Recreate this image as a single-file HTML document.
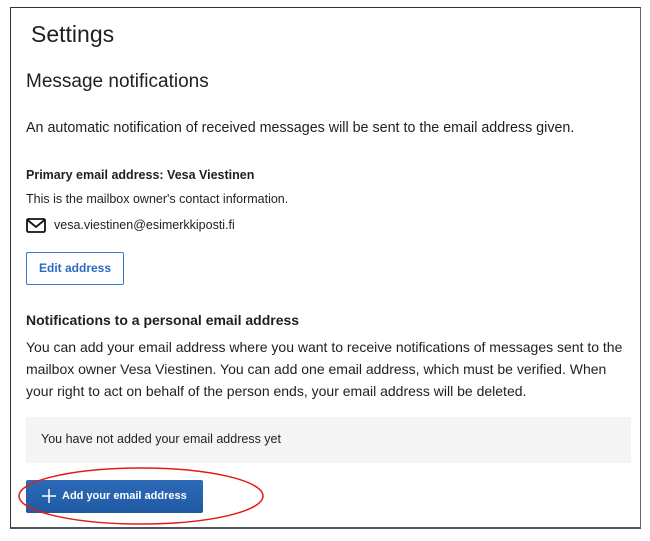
<!DOCTYPE html>
<html><head><style>
*{margin:0;padding:0;box-sizing:border-box}
body{width:650px;height:541px;background:#fff;font-family:"Liberation Sans",sans-serif;color:#1f1f1f;position:relative;overflow:hidden}
.frame{position:absolute;left:10px;top:7px;width:631px;height:522px;border:1px solid #333;border-right-color:#666;border-bottom:2px solid #555}
.t{position:absolute;white-space:nowrap}
</style></head><body>
<div class="frame"></div>
<div class="t" style="left:31px;top:21px;font-size:23px">Settings</div>
<div class="t" style="left:26px;top:71px;font-size:19px">Message notifications</div>
<div class="t" style="left:26px;top:120px;font-size:14.3px">An automatic notification of received messages will be sent to the email address given.</div>
<div class="t" style="left:26px;top:168px;font-size:12.5px;font-weight:bold">Primary email address: Vesa Viestinen</div>
<div class="t" style="left:26px;top:192px;font-size:12.5px">This is the mailbox owner's contact information.</div>
<svg style="position:absolute;left:26px;top:218px" width="20" height="15" viewBox="0 0 20 15"><rect x="1" y="1" width="18" height="13" rx="1.5" fill="none" stroke="#111" stroke-width="1.8"/><path d="M1.5 2 L10 9 L18.5 2" fill="none" stroke="#111" stroke-width="1.8"/></svg>
<div class="t" style="left:54px;top:218px;font-size:12.5px">vesa.viestinen@esimerkkiposti.fi</div>
<div style="position:absolute;left:26px;top:252px;width:98px;height:33px;border:1px solid #3a78c8;border-radius:2px;color:#2a6bbf;font-size:12px;font-weight:bold;text-align:center;line-height:31px">Edit address</div>
<div class="t" style="left:26px;top:312px;font-size:14px;font-weight:bold">Notifications to a personal email address</div>
<div class="t" style="left:26px;top:336px;font-size:14px;line-height:22px">You can add your email address where you want to receive notifications of messages sent to the<br>mailbox owner Vesa Viestinen. You can add one email address, which must be verified. When<br>your right to act on behalf of the person ends, your email address will be deleted.</div>
<div style="position:absolute;left:26px;top:417px;width:605px;height:46px;background:#f4f4f4"></div>
<div class="t" style="left:41px;top:432px;font-size:12.5px">You have not added your email address yet</div>
<div style="position:absolute;left:26px;top:480px;width:177px;height:33px;background:linear-gradient(#2d6bb8,#1f5aa3);border-radius:2px;color:#fff;font-size:11px;font-weight:bold;line-height:33px;padding-left:36px">Add your email address</div>
<svg style="position:absolute;left:41px;top:488px" width="16" height="16"><path d="M8 1V15M1 8H15" stroke="#fff" stroke-width="1.5"/></svg>
<svg style="position:absolute;left:0;top:0" width="650" height="541"><ellipse cx="141" cy="496" rx="122" ry="28" fill="none" stroke="#e21b1b" stroke-width="1.5"/></svg>
</body></html>
